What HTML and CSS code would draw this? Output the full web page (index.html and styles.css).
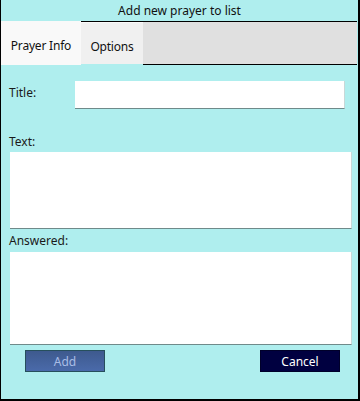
FILE: index.html
```html
<!DOCTYPE html>
<html lang="en">
  <head>
    <meta charset="UTF-8" />
    <meta name="viewport" content="width=device-width, initial-scale=1.0" />
    <title>Add new prayer to list</title>
    <link rel="stylesheet" href="styles.css">
  </head>
  <body>
    <div class="window">
      <!-- Title bar -->
      <div class="titlebar">Add new prayer to list</div>

      <!-- Tabs -->
      <div class="tabs">
        <div class="tab active">Prayer Info</div>
        <div class="tab">Options</div>
        <div class="tab-fill"></div>
      </div>

      <div class="content">
        <div class="title-row">
          <label class="label title-label">Title:</label>
          <div class="field title-field"></div>
        </div>

        <label class="label block-label">Text:</label>
        <div class="field text-field"></div>

        <label class="label answered-label">Answered:</label>
        <div class="field answered-field"></div>

        <div class="buttons">
          <button class="btn btn-add">Add</button>
          <button class="btn btn-cancel">Cancel</button>
        </div>
      </div>
    </div>
  </body>
</html>
```

FILE: styles.css
```css
/* Global Styles */
* {
  margin: 0;
  padding: 0;
  box-sizing: border-box;
  font-family: "Noto Sans", "Open Sans", sans-serif;
}

body {
  background: #afeeee;
  color: #1a1a1a;
}

.window {
  width: 360px;
  height: 401px;
  background: #afeeee;
  border-left: 1px solid #000;
  border-right: 2px solid #000;
  border-bottom: 2px solid #000;
}

.titlebar {
  height: 21px;
  line-height: 21px;
  text-align: center;
  font-size: 12px;
  color: #111;
}

.tabs {
  display: flex;
  height: 44px;
}

.tab {
  height: 43px;
  padding-top: 16px;
  font-size: 12px;
  letter-spacing: -0.2px;
  text-align: center;
  color: #111;
}

.tab.active {
  width: 80px;
  height: 44px;
  background: #f9f9f9;
}

.tab:not(.active) {
  width: 62px;
  border-top: 1px solid #000;
  background: #f0f0f0;
  box-shadow: inset 0 1px 0 #fafafa;
}

.tab-fill {
  flex: 1;
  height: 44px;
  margin-right: 1px;
  background: #e0e0e0;
  border-top: 1px solid #000;
  border-bottom: 1px solid #000;
}

.content {
  padding: 16px 8px 0 8px;
}

.label {
  display: block;
  font-size: 12px;
  line-height: 16px;
}

.title-row {
  display: flex;
  align-items: flex-start;
  height: 28px;
}

.title-label {
  width: 66px;
  padding-top: 4px;
}

.field {
  background: #fff;
  border-right: 1px solid #c8d8d8;
  border-bottom: 1px solid #6f8a8a;
}

.title-field {
  width: 270px;
  height: 28px;
}

.block-label {
  margin-top: 25px;
}

.text-field {
  width: 342px;
  height: 77px;
  margin: 2px 0 0 1px;
}

.answered-label {
  margin-top: 4px;
}

.answered-field {
  width: 342px;
  height: 93px;
  margin: 3px 0 0 1px;
}

.buttons {
  display: flex;
  justify-content: space-between;
  margin-top: 5px;
  padding: 0 10px 0 16px;
}

.btn {
  width: 80px;
  height: 22px;
  font-size: 12px;
  cursor: pointer;
}

.btn-add {
  background: linear-gradient(#3e5a8e, #4a6aaa);
  border: 1px solid #264f5c;
  color: #a9bde6;
}

.btn-cancel {
  background: #000040;
  border: 1px solid #00002a;
  color: #fff;
}
```
